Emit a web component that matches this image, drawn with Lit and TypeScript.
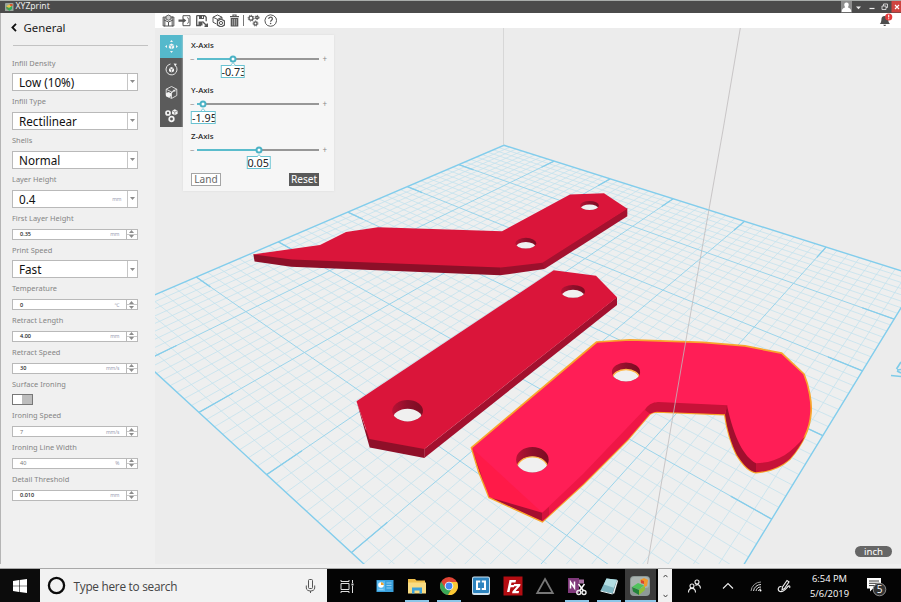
import { LitElement, html, svg, css, nothing } from "lit";
import { customElement, property } from "lit/decorators.js";

type Pt = [number, number];

/* ---------- build plate projection ---------- */

// [u, v, x, y]: plate ticks in inches and where they land in the viewport
const ANCHORS: number[][] = [
  [0, 0, 503.5, 145],
  [1, 0, 460, 164.3], [2, 0, 407.3, 186.7], [3, 0, 347.7, 212], [4, 0, 278.3, 242], [5, 0, 196, 277.3],
  [0, 1, 554, 161.3], [0, 2, 610, 179], [0, 3, 672.7, 199], [0, 4, 744.3, 221], [0, 5, 826.7, 247.3],
  [1, 6, 894.3, 319], [2, 6, 862.3, 371], [3, 6, 822.7, 435.3], [4, 6, 771.7, 519.3],
  [6, 2, 199, 412.3], [6, 3, 266.7, 474.3], [6, 4, 351.7, 552.7],
];

function fitPlane(anchors: number[][]): number[] {
  const n = 8;
  const m = Array.from({ length: n }, () => new Array(n + 1).fill(0));
  const add = (row: number[], rhs: number) => {
    for (let i = 0; i < n; i++) {
      for (let j = 0; j < n; j++) m[i][j] += row[i] * row[j];
      m[i][n] += row[i] * rhs;
    }
  };
  for (const [u, v, x, y] of anchors) {
    add([u, v, 1, 0, 0, 0, -u * x, -v * x], x);
    add([0, 0, 0, u, v, 1, -u * y, -v * y], y);
  }
  for (let c = 0; c < n; c++) {
    let p = c;
    for (let r = c + 1; r < n; r++) if (Math.abs(m[r][c]) > Math.abs(m[p][c])) p = r;
    [m[c], m[p]] = [m[p], m[c]];
    for (let r = 0; r < n; r++) {
      if (r === c) continue;
      const f = m[r][c] / m[c][c];
      for (let k = c; k <= n; k++) m[r][k] -= f * m[c][k];
    }
  }
  return m.map((row, i) => row[n] / row[i]);
}

const H = fitPlane(ANCHORS);
const project = (u: number, v: number): Pt => {
  const w = H[6] * u + H[7] * v + 1;
  return [(H[0] * u + H[1] * v + H[2]) / w, (H[3] * u + H[4] * v + H[5]) / w];
};
const seg = (u1: number, v1: number, u2: number, v2: number) => {
  const a = project(u1, v1);
  const b = project(u2, v2);
  return `M${a[0].toFixed(2)} ${a[1].toFixed(2)}L${b[0].toFixed(2)} ${b[1].toFixed(2)}`;
};

const SIZE = 6;
const STEPS = 8;
let minor = "";
let major = "";
let ticks = "";
for (let i = 1; i < SIZE * STEPS; i++) {
  const t = i / STEPS;
  const d = seg(t, 0, t, SIZE) + seg(0, t, SIZE, t);
  if (i % STEPS) minor += d;
  else {
    major += d;
    ticks += seg(t, 0, t, 0.3) + seg(t, SIZE - 0.3, t, SIZE) + seg(0, t, 0.3, t) + seg(SIZE - 0.3, t, SIZE, t);
  }
}
const border = [[0, 0], [0, SIZE], [SIZE, SIZE], [SIZE, 0]]
  .map(([u, v], i) => `${i ? "L" : "M"}${project(u, v).map((n) => n.toFixed(2)).join(" ")}`)
  .join("") + "Z";

@customElement("plate-view")
class PlateView extends LitElement {
  static styles = css`
    :host { display: block; }
    svg { display: block; width: 746px; height: 536px; }
  `;

  private hole(id: string, cx: number, cy: number, rx: number, ry: number, drop: number, edge = "none") {
    return svg`
      <clipPath id=${id}><ellipse cx=${cx} cy=${cy} rx=${rx} ry=${ry}/></clipPath>
      <ellipse cx=${cx} cy=${cy} rx=${rx} ry=${ry} fill="url(#bore)"/>
      <ellipse cx=${cx} cy=${cy + drop} rx=${rx * 0.96} ry=${ry * 0.96} fill="#f0f0f0" stroke=${edge}
        stroke-width="1.3" clip-path="url(#${id})"/>`;
  }

  render() {
    return html`<svg viewBox="155 28 746 536">
      <defs>
        <linearGradient id="bore" x1="0" x2="1">
          <stop offset="0" stop-color="#b81235"/><stop offset=".5" stop-color="#8e0f2a"/><stop offset="1" stop-color="#7c0c22"/>
        </linearGradient>
      </defs>
      <rect x="155" y="28" width="746" height="536" fill="#ececec"/>
      <path d=${border} fill="#eeefef" stroke="none"/>
      <g fill="none">
        <path d=${minor} stroke="#c2e2ee" stroke-width=".75"/>
        <path d=${major} stroke="#9ad4eb" stroke-width="1"/>
        <path d=${ticks} stroke="#86cdea" stroke-width="1.3"/>
        <path d=${border} stroke="#82cdec" stroke-width="1.4"/>
        <path d="M503.5 28V145" stroke="#d2d2d2" stroke-width=".8"/>
        <path d="M891 375.500l10 1M896.500 369l4.500-7M901 369.500l-4 .5M897 371l4 2" stroke="#7fcbe8" stroke-width="1.700"/>
      </g>

      <path fill="#8d0f28" d="M253.3 254.3L254.6 261.5 291 266.7 500 275.3 500.7 260 291 255Z"/>
      <path fill="#9b102c" d="M500 267L500 275.3 544.5 269 545 260Z"/>
      <path fill="#a5112f" d="M542 262L544.5 269 627.3 216.3V208Z"/>
      <path fill="#da153a" d="M253.3 254.3L320 245 346 232 378 227.3 502 231.3 570 194.5 604 193.3 627.3 208.7 542.5 262.7 500.7 267.5 291.7 259.5Z"/>
      ${this.hole("h1", 589.5, 205.5, 9.4, 4.5, 3.2)}
      ${this.hole("h2", 525.8, 243.2, 10.4, 5.4, 4)}

      <path fill="#8f0f28" d="M356.5 401.3L369.7 447.5 424.5 458V445L366 430Z"/>
      <path fill="#a3102e" d="M424.3 449V458L617 305V297Z"/>
      <path fill="#da153a" d="M356.5 401.3L553.7 270.3 596 275.7 617 297.3 424.3 449 369.3 439Z"/>
      ${this.hole("h3", 573, 291.4, 11.9, 6.4, 4.6)}
      ${this.hole("h4", 407.6, 410.7, 15.4, 10.7, 8.4)}

      <path fill="#ff1e56" stroke="#f9a52c" stroke-width="1.700" stroke-linejoin="round"
        d="M471.5 447.7L596.7 342 630 339.9 703 342.3 745 345.9 781.7 353.2 804 374C809 386 812 403 811 413C810 428 803 444 790 459C781 467 768 472 756 472.6C750 472 743 465 736.7 455C731 444 727 430 724.7 414.7L657 412Q653 412 650 414L628.3 439.3 583.3 484.3 542.3 521.8 489.2 497.6 478.7 471.7Z"/>
      <path fill="#ef1646" d="M542.3 512.7V521.5L583.3 484 628.3 439 650 413.700 655 412V402Q650 404 646 408L583 474Z"/>
      <path fill="#c61238" d="M650 413.700Q653 411.700 657 411.700L724.7 414.2 727.5 405.3 658 402Q649 402.5 645 410Z"/>
      <path fill="#c61238" d="M756 463.2V472.2C768 471.800 781 467 790 458.800 797 451 802 443 805 436 790 455 775 463 756 463.2Z"/>
      <path fill="#a10f2e" d="M727 405.5L725.1 414.7C727.3 430 731.3 444 737 455 743.2 465 750.2 471.800 756 472.200V463.2C744 457 734 438 727 405.5Z"/>
      <path fill="#ff1a48" d="M472 448L489.2 497 542.3 512.7Z"/>
      <path fill="#a40f2f" d="M491 497.8L542.3 512.7V521Z"/>
      <path fill="#a40f2f" d="M472.2 449L479.4 471 486 489Q478 465 472.2 449Z"/>
      <path fill="#d3143c" d="M542.3 512.7V521.3L549 515V507Z"/>
      ${this.hole("h5", 626, 372, 14.1, 9.5, 6.6, "#ffb84a")}
      ${this.hole("h6", 532.4, 459.7, 16.3, 12.8, 9.4, "#ffb84a")}
      <path d="M740.3 28L723 130 687.7 330 647.5 564" stroke="#bfbbbc" stroke-width=".8" fill="none"/>
    </svg>`;
  }
}

/* ---------- left settings panel ---------- */

interface Field { label: string; kind: "select" | "spin" | "toggle"; value?: string; unit?: string; dim?: boolean; }

const FIELDS: Field[] = [
  { label: "Infill Density", kind: "select", value: "Low (10%)" },
  { label: "Infill Type", kind: "select", value: "Rectilinear" },
  { label: "Shells", kind: "select", value: "Normal" },
  { label: "Layer Height", kind: "select", value: "0.4", unit: "mm" },
  { label: "First Layer Height", kind: "spin", value: "0.35", unit: "mm" },
  { label: "Print Speed", kind: "select", value: "Fast" },
  { label: "Temperature", kind: "spin", value: "0", unit: "℃" },
  { label: "Retract Length", kind: "spin", value: "4.00", unit: "mm" },
  { label: "Retract Speed", kind: "spin", value: "30", unit: "mm/s" },
  { label: "Surface Ironing", kind: "toggle" },
  { label: "Ironing Speed", kind: "spin", value: "7", unit: "mm/s", dim: true },
  { label: "Ironing Line Width", kind: "spin", value: "40", unit: "%", dim: true },
  { label: "Detail Threshold", kind: "spin", value: "0.010", unit: "mm" },
];

@customElement("settings-panel")
class SettingsPanel extends LitElement {
  static styles = css`
    :host { display: block; box-sizing: border-box; width: 155px; padding-left: 12px; background: #f0f0f0;
      border-left: 1px solid #b5b5b5; font-family: "Noto Sans", "Open Sans", sans-serif; }
    .head { display: flex; align-items: center; gap: 6.5px; height: 30px; margin-left: -2px; font-size: 11.4px; color: #222; }
    .head svg { width: 6px; height: 9px; }
    .rule { height: 1px; background: #c2c2c2; width: 135px; margin: 2px 0 8px; }
    .label { height: 20.75px; line-height: 21px; font-size: 7.45px; color: #858585; white-space: nowrap; margin-left: -1px; }
    .rule + .label { height: 19.3px; line-height: 19.3px; }
    .box { display: flex; box-sizing: border-box; width: 126px; margin-left: -1px; border: 1px solid #b9b9b9; background: #fff; }
    .select { height: 18.2px; }
    .spin { height: 11px; }
    .value { flex: 1; display: flex; align-items: center; padding-left: 6px; color: #111; }
    .select .value { font-size: 11.7px; }
    .spin .value { font-size: 5.5px; font-weight: 500; padding-left: 7px; }
    .spin.dim .value { color: #777; font-weight: 400; }
    .unit { display: flex; align-items: center; padding-right: 5px; font-size: 5px; color: #999ab0; }
    .spin .unit { padding-right: 6px; }
    .drop { display: flex; align-items: center; justify-content: center; width: 9.5px; border-left: 1px solid #c6c6c6; }
    .drop svg { width: 5px; height: 3px; }
    .steps { display: flex; flex-direction: column; width: 10.5px; border-left: 1px solid #b9b9b9; }
    .step { flex: 1; display: flex; align-items: center; justify-content: center; }
    .step + .step { border-top: .6px solid #c8c8c8; }
    .step svg { width: 5px; height: 3px; }
    .toggle { box-sizing: border-box; display: flex; width: 21px; height: 11px; margin-left: -1px; border: 1px solid #777; background: #fff; }
    .knob { width: 10px; margin-left: auto; background: #bdbdbd; }
  `;

  private field(f: Field) {
    const down = html`<svg viewBox="0 0 5 3"><path d="M0 0h5L2.5 3z" fill="#8c8c8c"/></svg>`;
    const up = html`<svg viewBox="0 0 5 3"><path d="M0 3h5L2.5 0z" fill="#8c8c8c"/></svg>`;
    return html`
      <div class="label">${f.label}</div>
      ${f.kind === "toggle"
        ? html`<div class="toggle"><div class="knob"></div></div>`
        : html`<div class="box ${f.kind} ${f.dim ? "dim" : ""}">
            <div class="value">${f.value}</div>
            ${f.unit ? html`<div class="unit">${f.unit}</div>` : nothing}
            ${f.kind === "select"
              ? html`<div class="drop">${down}</div>`
              : html`<div class="steps"><div class="step">${up}</div><div class="step">${down}</div></div>`}
          </div>`}`;
  }

  render() {
    return html`
      <div class="head">
        <svg viewBox="0 0 6 9"><path d="M5 .8L1.4 4.5 5 8.2" fill="none" stroke="#111" stroke-width="1.8"/></svg>
        <span>General</span>
      </div>
      <div class="rule"></div>
      ${FIELDS.map((f) => this.field(f))}`;
  }
}

/* ---------- move tool ---------- */

interface Axis { name: string; value: string; pos: number; }

const AXES: Axis[] = [
  { name: "X-Axis", value: "-0.73", pos: 35.5 },
  { name: "Y-Axis", value: "-1.95", pos: 6 },
  { name: "Z-Axis", value: "0.05", pos: 61.5 },
];

@customElement("move-panel")
class MovePanel extends LitElement {
  static styles = css`
    :host { display: flex; align-items: flex-start; width: 174px; font-family: "Noto Sans", "Open Sans", sans-serif; }
    .tools { width: 23px; background: #5b5b5b; height: 92px; }
    .tool { display: flex; align-items: center; justify-content: center; height: 23px; }
    .tool.on { background: #55b9cc; }
    .tool svg { width: 15px; height: 15px; }
    .card { box-sizing: border-box; width: 151px; height: 156px; padding: 3.5px 0 0 8px; background: #f6f6f6; box-shadow: 0 0 2px #dadada; }
    .axis { height: 45.6px; }
    .name { height: 13.5px; line-height: 13px; font-size: 7.9px; font-weight: 500; color: #222; }
    .axis + .axis .name { line-height: 12px; }
    .slider { display: flex; align-items: center; height: 13px; }
    .sign { width: 6px; font-size: 8px; line-height: 8px; color: #888; margin-left: -1px; }
    .track { position: relative; width: 122px; height: 2px; margin-right: 4.5px; background: #979797; margin-left: 1px; }
    .fill { height: 100%; background: #5bbccc; }
    .thumb { position: absolute; top: 50%; width: 7px; height: 7px; box-sizing: border-box; border: 2px solid #4ab2c5;
      border-radius: 50%; background: #fff; transform: translate(-50%, -50%); }
    .bubble { position: absolute; top: 7.5px; width: 24.5px; height: 13px; box-sizing: border-box; border: 1px solid #69c2d1; background: #fff;
      transform: translateX(-50%); font-size: 10.8px; line-height: 11.5px; color: #222; overflow: hidden; white-space: nowrap; }
    .bubble span { padding-left: .2px; }
    .tip { position: absolute; top: 4.9px; width: 5px; height: 3.5px; transform: translateX(-50%); }
    .buttons { display: flex; justify-content: space-between; width: 128px; margin-top: -2.6px; }
    .btn { box-sizing: border-box; width: 30px; height: 13px; border: 1px solid #a5a5a5; background: #fff; color: #666;
      font-size: 10.1px; line-height: 11px; text-align: center; display: flex; justify-content: center; }
    .btn.dark { background: #5a5a5a; border-color: #5a5a5a; color: #fff; }
  `;

  render() {
    const w = "#f4f4f4";
    return html`
      <div class="tools">
        <div class="tool on"><svg viewBox="0 0 15 15"><path d="M7.500 4.600l2.600 1.300v3L7.500 10.300l-2.600-1.400v-3z" fill="${w}"/><path d="M7.500 7.300v3M4.900 6l2.600 1.300L10.100 6" stroke="#55b9cc" stroke-width=".6" fill="none"/>
          <path d="M7.500 1l1.500 2h-3zM7.500 14l1.500-2h-3zM1 7.500l2-1.500v3zM14 7.500l-2-1.500v3z" fill="${w}"/></svg></div>
        <div class="tool"><svg viewBox="0 0 15 15"><path d="M11.500 3.600A5.500 5.500 0 1 1 6.500 2" fill="none" stroke="${w}" stroke-width=".9"/><path d="M9.600 1.500l3.200.3-1.500 2.700z" fill="${w}"/><path d="M7.500 5l2.500 1.200v3L7.500 10.500 5 9.200v-3z" fill="${w}"/><path d="M7.500 7.500v3M5 6.200l2.500 1.300L10 6.200" stroke="#5b5b5b" stroke-width=".6" fill="none"/></svg></div>
        <div class="tool"><svg viewBox="0 0 15 15"><path d="M7.500 1.500l5.300 2.700v6.300l-5.300 3-5.300-3V4.200zM2.200 4.200l5.300 2.700 5.300-2.700M7.500 7v6" fill="none" stroke="${w}" stroke-width=".8"/><path d="M4.500 7l2.700 1.200v3L4.500 12.500 2 11.200v-3z" fill="${w}"/><path d="M7.600 8l3-2.500M9 5.300h1.800V7" stroke="${w}" stroke-width=".7" fill="none"/></svg></div>
        <div class="tool"><svg viewBox="0 0 15 15"><g fill="none" stroke="${w}" stroke-width="1.700"><circle cx="4" cy="5" r="2"/><circle cx="7.500" cy="11" r="2.300"/></g><path d="M10.800 1.300l2.800 1.400v3l-2.800 1.500L8 5.700v-3z" fill="${w}"/><path d="M10.800 4v3M8 2.700L10.800 4l2.800-1.300" stroke="#5b5b5b" stroke-width=".6" fill="none"/></svg></div>
      </div>
      <div class="card">
        ${AXES.map((a) => {
          const x = (a.pos / 122) * 100;
          return html`<div class="axis">
            <div class="name">${a.name}</div>
            <div class="slider">
              <span class="sign">−</span>
              <div class="track">
                <div class="fill" style="width:${x}%"></div>
                <div class="bubble" style="left:${x}%"><span>${a.value}</span></div>
                <svg class="tip" style="left:${x}%" viewBox="0 0 5 3.5"><path d="M0 3.400L2.500.6 5 3.400" fill="#fff" stroke="#69c2d1" stroke-width=".9"/></svg>
                <div class="thumb" style="left:${x}%"></div>
              </div>
              <span class="sign">+</span>
            </div>
          </div>`;
        })}
        <div class="buttons"><div class="btn">Land</div><div class="btn dark">Reset</div></div>
      </div>`;
  }
}

/* ---------- window chrome ---------- */

@customElement("title-bar")
class TitleBar extends LitElement {
  static styles = css`
    :host { display: flex; box-sizing: border-box; height: 12.500px; border-top: 1px solid #a9adab; background: #4b4b4b; align-items: center;
      color: #eee; font: 8.600px/11px "Noto Sans", sans-serif; padding-left: 5px; }
    .logo { width: 8.500px; height: 8.500px; margin-right: 2px; }
    .name { flex: 1; }
    .controls { width: 61px; height: 11.500px; }
  `;
  render() {
    return html`
      <svg class="logo" viewBox="0 0 17 17"><rect width="17" height="17" rx="2" fill="#9aa39c"/><path d="M2 7l6-4 6 3-5 4z" fill="#e8c447"/><path d="M2 7l6 3v5l-5-3z" fill="#4a9a4b"/><path d="M8 10l6-4v6l-6 4z" fill="#2fae5c"/><path d="M9 2h6v4h-4z" fill="#d8552e"/></svg>
      <span class="name">XYZprint</span>
      <svg class="controls" viewBox="0 0 61 11.500">
        <rect x="1" y="0" width="11" height="11.500" fill="#8d8d8d"/>
        <path d="M6.500 1.500c1.700 0 2.400 1.200 2.200 2.800-.1 1-.6 1.600-.9 2 .8.900 3 1 3.400 3.200v1.500H1.800V9.500c.4-2.200 2.500-2.300 3.400-3.200-.3-.4-.8-1-.9-2C4.100 2.700 4.800 1.500 6.500 1.500z" fill="#fff"/>
        <path d="M16 5.500h5l-2.500 2.700z" fill="#eee"/>
        <path d="M29.500 7.500h5" stroke="#eee" stroke-width="1.200"/>
        <path d="M42 5h4v3.500h-4zM43.500 5V3h4v3.500H46" fill="none" stroke="#ddd" stroke-width=".9"/>
        <rect x="51.500" y="0" width="9.500" height="11.500" fill="#cf4340"/>
        <path d="M55 4l4 4M59 4l-4 4" stroke="#fff" stroke-width="1.100"/>
      </svg>`;
  }
}

@customElement("tool-bar")
class ToolBar extends LitElement {
  static styles = css`
    :host { display: flex; align-items: center; height: 15.500px; background: #fff; padding: 0 8px 0 6.500px; }
    .icons { display: flex; align-items: center; flex: 1; }
    .icon { width: 13px; height: 13px; margin-right: 3.700px; }
    .sep { width: 1px; height: 11px; background: #777; margin: 0 3px 0 -1.500px; }
    .bell { width: 14px; height: 14px; }
  `;
  render() {
    const g = "#555";
    const gear = (x: number, y: number, r: number) => svg`
      <circle cx=${x} cy=${y} r=${r} fill="none" stroke=${g} stroke-width="1.300"/>
      <circle cx=${x} cy=${y} r=${r + 0.9} fill="none" stroke=${g} stroke-width=".9" stroke-dasharray="1.200 1"/>`;
    const icons = [
      svg`<path d="M2 3v9h9V3M2 6l4.500 2L11 6M6.500 8v4M3 3h1.500M8.500 3H11" fill="none" stroke="${g}" stroke-width="1"/><path d="M1 3h2v9H1zM10 3h2v9h-2z" fill="none" stroke="${g}" stroke-width=".7"/><path d="M6.500 1l2.500 1.300v2.700L6.500 6.300 4 5V2.300z" fill="#ccc" stroke="${g}" stroke-width=".9"/>`,
      svg`<path d="M5 4V1.700h7v10H5V9" fill="none" stroke="${g}" stroke-width="1"/><path d="M.5 5.500h4V3.500L8.300 6.600 4.500 9.500V7.700h-4z" fill="${g}"/><path d="M9 3.500l1.800 1v4L9 9.500" fill="none" stroke="${g}" stroke-width=".8"/>`,
      svg`<path d="M1.700 1.700h8l1.500 1.500v4M6 11.500H1.700v-10" fill="none" stroke="${g}" stroke-width="1.300"/><path d="M4 1.500h5v3.500H4zM3.500 7.500h4v4h-4z" fill="${g}"/><path d="M7 2.200h1v1.800H7z" fill="#fff"/><path d="M7.500 7.500l4.500 4.500M12.300 9.500v2.800H9.500" stroke="${g}" stroke-width="1.400" fill="none"/>`,
      svg`<path d="M5.500 1l4.500 2.200v2M5.500 1L1 3.200v5L4.500 10M1 3.200l4.500 2.200L10 3.200M5.500 5.400V7" fill="none" stroke="${g}" stroke-width="1"/><path d="M9 5l3.500 2v4L9 13l-3.500-2V7z" fill="#fff" stroke="${g}" stroke-width="1.300"/><circle cx="9" cy="9" r="1.600" fill="none" stroke="${g}" stroke-width="1"/>`,
      svg`<path d="M2 2.700h9M5 2.500V1h3v1.500" fill="none" stroke="${g}" stroke-width="1.200"/><path d="M2.700 4h7.600v8.500H2.700z" fill="${g}"/><path d="M4.700 5v6.500M6.500 5v6.500M8.300 5v6.500" stroke="#ddd" stroke-width=".6"/>`,
      svg`${gear(4, 4.200, 2)}${gear(10, 3.500, 1.200)}${gear(8.500, 9.500, 1.600)}`,
      svg`<path d="M6.500.8l3.200.9 2.300 2.200.6 2.800-1 3-2.300 2-2.800.6-3-.8-2-2.200-.6-3 1-3 2-1.700z" fill="#fff" stroke="${g}" stroke-width="1"/><path d="M4.700 5c0-2.600 3.700-2.400 3.700-.2 0 1.300-1.800 1.500-1.800 3" fill="none" stroke="${g}" stroke-width="1.200"/><circle cx="6.600" cy="9.500" r=".8" fill="${g}"/>`,
    ];
    return html`
      <div class="icons">${icons.map((i, n) => html`${n === 5 ? html`<div class="sep"></div>` : nothing}<svg class="icon" viewBox="0 0 13 13">${i}</svg>`)}</div>
      <svg class="bell" viewBox="0 0 14 14"><path d="M5.500 3c2.500 0 3.500 1.500 3.700 3.500.1 2.500.8 3.500 1.800 4.500H.8C1.800 10 2.300 9 2.400 6.500 2.500 4.500 3.300 3 5.500 3zM4.300 11.800h2.800c-.3 1.600-2.500 1.600-2.800 0z" fill="#4d4d4d"/><circle cx="9.700" cy="4" r="3.600" fill="#e23b3b"/><path d="M9.700 1.800v2.800M9.700 5.300v1" stroke="#fff" stroke-width="1.100"/></svg>`;
  }
}

/* ---------- Windows taskbar ---------- */

@customElement("task-bar")
class TaskBar extends LitElement {
  @property() time = "6:54 PM";
  @property() date = "5/6/2019";

  static styles = css`
    :host { display: flex; height: 33px; background: #040404; font-family: "Open Sans", "Noto Sans", sans-serif; }
    .start { width: 40px; display: flex; align-items: center; justify-content: center; background: #0c0c0c; }
    .start svg { width: 14px; height: 14px; }
    .search { display: flex; align-items: center; width: 287px; box-sizing: border-box; background: #f2f2f2; padding: 0 11px 0 7px; color: #444; }
    .search .ring { width: 19px; height: 19px; }
    .search .hint { flex: 1; margin-left: 7.500px; font-size: 11.800px; letter-spacing: -.26px; }
    .search .mic { width: 11px; height: 16px; }
    .apps { display: flex; width: 331px; box-sizing: border-box; padding-left: 4.500px; }
    .app { display: flex; flex-direction: column; align-items: center; width: 31.900px; height: 33px; }
    .app.first { margin-right: 6px; }
    .app svg { width: 22px; height: 22px; margin: 6px 0 3px; }
    .bar { width: 24px; height: 2px; background: #8cc6e8; }
    .app.on { background: #3b3b3b; }
    .app.on .bar { width: 100%; }
    .scroll { display: flex; flex-direction: column; justify-content: space-between; align-items: center; width: 14px; box-sizing: border-box; padding: 5px 0 4px; background: #f0f0f0; }
    .scroll svg { width: 5px; height: 4px; }
    .tray { display: flex; flex: 1; align-items: center; color: #fff; }
    .tray svg.ic { width: 18px; height: 18px; }
    .people { margin-left: 13px; }
    .more { margin-left: 16px; }
    .wifi, .pen { margin-left: 10px; }
    .clock { width: 46px; text-align: center; font-size: 9.400px; line-height: 15px; margin-left: 13.500px; padding-top: 1px; white-space: nowrap; }
    .note { width: 23px; height: 22px; margin-left: 13.500px; }
  `;

  private icons() {
    return [
      { bar: false, art: svg`<g fill="none" stroke="#ddd" stroke-width="1"><path d="M5 8.500h8v6H5zM5 5v1.500h8V5M5 18v-1.500h8V18"/><path d="M16.500 5v3M16.500 11v7"/></g><rect x="15.500" y="8.500" width="2" height="2" fill="#ddd"/>` },
      { bar: false, art: svg`<rect x="2.500" y="5" width="17" height="12" fill="#3aa0dc"/><rect x="3" y="6" width="8" height="10" fill="#58b9ef"/><circle cx="7" cy="10" r="2.800" fill="#fff"/><path d="M7 10V7.200A2.800 2.800 0 0 1 9.800 10z" fill="#f0a32f"/><path d="M12.500 8h5M12.500 10.500h5M12.500 13h5M4.500 14.500h5" stroke="#8fcdf2" stroke-width="1"/>` },
      { bar: true, art: svg`<path d="M2 4h7l1.500 1.500H19V11H2z" fill="#f0c04c"/><path d="M2 7.500h18v11H2z" fill="#f9dc83"/><path d="M6 18.500v-6h10v6h-2.500v-3h-5v3z" fill="#3ca2dc"/>` },
      { bar: true, art: svg`<circle cx="11" cy="11" r="9" fill="#e04435"/><path d="M3.200 6.500A9 9 0 0 0 10 20l4.300-7.400L7 13z" fill="#3aa757"/><path d="M10 20A9 9 0 0 0 19 7h-8l3.800 5z" fill="#fbc934"/><circle cx="11" cy="11" r="4.300" fill="#fff"/><circle cx="11" cy="11" r="3.400" fill="#4688f1"/>` },
      { bar: false, art: svg`<rect x="2" y="1.500" width="18" height="18.500" rx="2" fill="#cfe2ee"/><rect x="3" y="2.500" width="16" height="15.500" rx="1" fill="#2d84bf"/><path d="M6 5.500h4.200v2H8v5.500h2.200v2H6zM16 5.500h-4.200v2H14v5.500h-2.200v2H16z" fill="#fff"/>` },
      { bar: false, art: svg`<rect x="1.500" y="1.500" width="19" height="19" fill="#b40d12"/><path d="M5 17L7.500 5H14l-.5 2.500H9.500L9 10h3.500l-.5 2.300H8.500L7.500 17zM12 9h6.500l-.4 2-4.500 5h3.500l-.5 2.200h-6.500l.4-2 4.500-5h-3.500z" fill="#fff"/>` },
      { bar: false, art: svg`<path d="M11 4l7.800 14H3.200z" fill="none" stroke="#777" stroke-width="1.800"/>` },
      { bar: true, art: svg`<path d="M2 3h11v15H2z" fill="#80397b"/><path d="M13 4.500h5v4h-5z" fill="#a873a5"/><path d="M4.500 13.500V7L8.500 13V6.500" fill="none" stroke="#fff" stroke-width="1.500"/><path d="M12.500 9l4.800 6.500M18.500 9l-4.800 6.500" stroke="#fff" stroke-width="1.500"/><circle cx="12.800" cy="17.500" r="2" fill="none" stroke="#eee" stroke-width="1.400"/><circle cx="18" cy="17.500" r="2" fill="none" stroke="#eee" stroke-width="1.400"/>` },
      { bar: true, art: svg`<path d="M8.500 3.500l10.500 1.300-4.500 14-12-3z" fill="#7fb6c2"/><path d="M8.500 3.500l10.500 1.300-3.200 8-10-3.300z" fill="#b3dee3"/><path d="M19 4.800l-4.500 14 1.800-.3L20 6z" fill="#e8f3f5"/><path d="M2.500 16l12 3" stroke="#e6f4f5" stroke-width="1"/>` },
      { bar: true, on: true, art: svg`<rect x="1" y="1" width="20" height="20" rx="4" fill="#8e9a97"/><rect x="2" y="2" width="18" height="11" rx="3" fill="#a9b3b0"/><path d="M3 12l6-4 6 2.500-5 4z" fill="#4fc35c"/><path d="M3 12l7 3v5l-6-3.500z" fill="#23843a"/><path d="M10 15l6-5v5l-6 5z" fill="#8fbf3a"/><path d="M11 5l4-2 4 2-1 6-3 1V7.500l-3 1z" fill="#f1992c"/><path d="M12 5l3 1v3l-3-1z" fill="#d8442c"/>` },
    ];
  }

  render() {
    return html`
      <div class="start"><svg viewBox="0 0 14 14"><path d="M0 2l6-.9v5.600H0zM6.600 1L14 0v6.700H6.600zM0 7.300h6v5.600L0 12zM6.600 7.300H14V14l-7.400-1z" fill="#fff"/></svg></div>
      <div class="search">
        <svg class="ring" viewBox="0 0 19 19"><circle cx="9.500" cy="9.500" r="7.600" fill="none" stroke="#0b0b0b" stroke-width="2.300"/></svg>
        <span class="hint">Type here to search</span>
        <svg class="mic" viewBox="0 0 11 16"><rect x="3.500" y="1.500" width="4" height="9" rx="1" fill="none" stroke="#555" stroke-width="1"/><path d="M1.300 7.500v2.500c0 4 8.400 4 8.400 0V7.500M5.500 13v2" fill="none" stroke="#555" stroke-width="1"/></svg>
      </div>
      <div class="apps">${this.icons().map((i, n) => html`<div class="app ${n === 0 ? "first" : ""} ${i.on ? "on" : ""}">
          <svg viewBox="0 0 22 22">${i.art}</svg>${i.bar ? html`<div class="bar"></div>` : nothing}</div>`)}</div>
      <div class="scroll">
        <svg viewBox="0 0 5 4"><path d="M.5 3.200L2.500 1l2 2.200" fill="none" stroke="#444" stroke-width="1"/></svg>
        <svg viewBox="0 0 5 4"><path d="M.5.8L2.500 3l2-2.200" fill="none" stroke="#444" stroke-width="1"/></svg>
      </div>
      <div class="tray">
        <svg class="ic people" viewBox="0 0 18 18"><g fill="none" stroke="#eee" stroke-width="1.100"><circle cx="7" cy="9" r="2"/><path d="M3.500 15.500c0-5.500 7-5.500 7 0"/><circle cx="12" cy="5" r="2"/><path d="M10.500 8.500c2-2 5-.5 5 3"/></g></svg>
        <svg class="ic more" viewBox="0 0 18 18"><path d="M4 11.500L9 6.500l5 5" fill="none" stroke="#eee" stroke-width="1.100"/></svg>
        <svg class="ic wifi" viewBox="0 0 18 18"><g fill="none" stroke="#ddd" stroke-width="1"><path d="M4 14A10 10 0 0 1 14 5" stroke="#999"/><path d="M6.500 14A7.500 7.500 0 0 1 14 7.500"/><path d="M9 14A5 5 0 0 1 14 10"/><path d="M11.300 14A2.800 2.800 0 0 1 14 12"/></g><circle cx="13.500" cy="13.500" r="1" fill="#fff"/></svg>
        <svg class="ic pen" viewBox="0 0 18 18"><g fill="none" stroke="#eee" stroke-width="1.100"><path d="M7 13l.5-3L12 3.500l2 1.300L9.500 11.500z"/><path d="M6.500 9.500C3 9 2 13.500 5 14.500c3.500 1 6-3 8-5 1.500-1.500 2.500 0 1.500 1.500"/></g></svg>
        <div class="clock">${this.time}<br />${this.date}</div>
        <svg class="note" viewBox="0 0 23 22"><path d="M1 3h14v10.500H7l-3 3v-3H1z" fill="#fff"/><path d="M3 6h10M3 8.300h10M3 10.600h6" stroke="#222" stroke-width=".9"/><circle cx="13.500" cy="14.500" r="6.300" fill="#333" stroke="#8a8a8a" stroke-width="1"/><text x="13.500" y="18" text-anchor="middle" font-size="10" font-family="Open Sans, sans-serif" fill="#fff">5</text></svg>
      </div>`;
  }
}

@customElement("app-root")
class AppRoot extends LitElement {
  static styles = css`
    :host { display: flex; flex-direction: column; width: 901px; height: 602px; overflow: hidden; background: #f0f0f0; }
    .body { display: flex; height: 551.500px; }
    .main { position: relative; width: 746px; }
    .move { position: absolute; left: 5px; top: 22.500px; }
    .inch { position: absolute; right: 9px; bottom: 7.500px; width: 37px; height: 11px; border-radius: 6px; background: #666; color: #fff;
      font: 9.600px/11px "Noto Sans", sans-serif; text-align: center; }
    .gap { box-sizing: border-box; height: 5px; background: #f0f0f0; border-bottom: 1px solid #a8a8a8; }
  `;
  render() {
    return html`
      <title-bar></title-bar>
      <div class="body">
        <settings-panel></settings-panel>
        <div class="main">
          <tool-bar></tool-bar>
          <plate-view></plate-view>
          <move-panel class="move"></move-panel>
          <div class="inch">inch</div>
        </div>
      </div>
      <div class="gap"></div>
      <task-bar></task-bar>`;
  }
}
